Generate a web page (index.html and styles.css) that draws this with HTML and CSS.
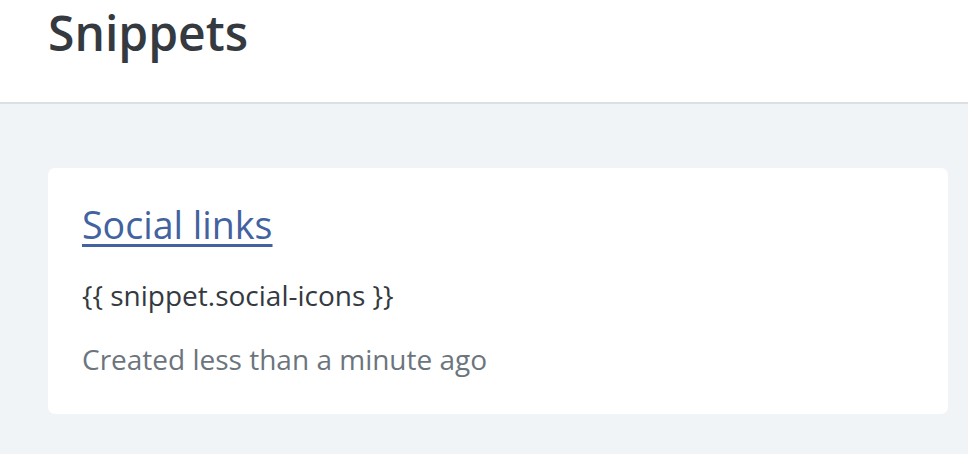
FILE: index.html
```html
<!DOCTYPE html>
<html>
<head>
<meta charset="utf-8">
<link rel="stylesheet" href="styles.css">
</head>
<body>
<header class="page-header">
  <h1 class="page-title">Snippets</h1>
</header>
<main class="content">
  <section class="card">
    <a class="card-title" href="#">Social links</a>
    <p class="card-code">{{ snippet.social-icons }}</p>
    <p class="card-meta">Created less than a minute ago</p>
  </section>
</main>
</body>
</html>
```
FILE: styles.css
```css
html, body {
  margin: 0;
  padding: 0;
}
body {
  font-family: "Open Sans", "Liberation Sans", sans-serif;
  background: #f1f4f7;
  color: #343a40;
  height: 454px;
  overflow: hidden;
}
.page-header {
  background: #fff;
  box-sizing: border-box;
  padding: 4px 48px 0;
  border-bottom: 2px solid #dadfe4;
  height: 104px;
}
.page-title {
  margin: 0;
  font-size: 48px;
  font-weight: 600;
  line-height: 1.2;
  color: #343a40;
}
.content {
  padding: 64px 20px 0 48px;
}
.card {
  background: #fff;
  border-radius: 7px;
  width: 900px;
  box-sizing: border-box;
  padding: 35px 34px 34px;
  display: flex;
  flex-direction: column;
  align-items: flex-start;
}
.card-title {
  font-size: 37.6px;
  line-height: 44px;
  color: #4262a0;
  text-decoration: underline;
  text-decoration-thickness: 3px;
  text-underline-offset: 5px;
}
.card-code {
  margin: 27px 0 0;
  font-size: 28px;
  line-height: 42px;
  color: #343a40;
}
.card-meta {
  margin: 22px 0 0;
  font-size: 28px;
  line-height: 42px;
  color: #6c757d;
}
```
